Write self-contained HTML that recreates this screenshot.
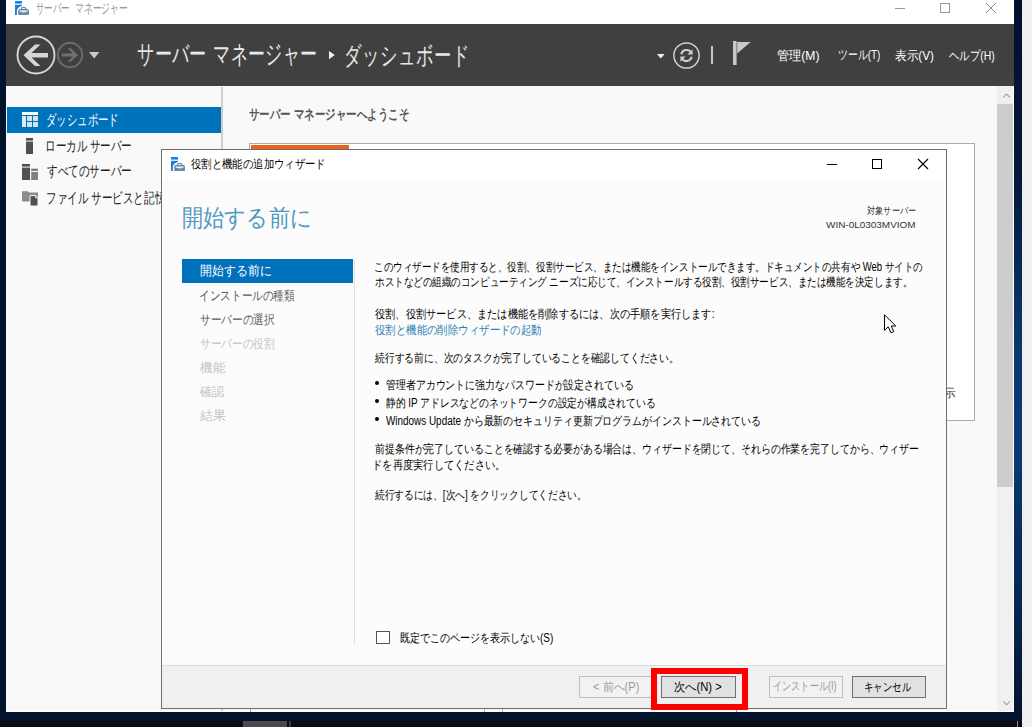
<!DOCTYPE html>
<html lang="ja">
<head>
<meta charset="utf-8">
<title>サーバー マネージャー</title>
<style>
html,body{margin:0;padding:0}
body{width:1032px;height:727px;position:relative;overflow:hidden;background:#01142c;font-family:"Liberation Sans",sans-serif;font-size:12px;color:#000}
.a{position:absolute;box-sizing:border-box}
.t{position:absolute;white-space:nowrap;transform-origin:0 50%;display:block}
svg{position:absolute;overflow:visible}
</style>
</head>
<body>
<!-- desktop strips -->
<div class="a" style="left:1014px;top:0;width:8px;height:721px;background:linear-gradient(180deg,#03102a 0%,#04183a 25%,#0a3568 45%,#0b3a72 60%,#072a58 80%,#03132e 100%)"></div>
<div class="a" style="left:1022px;top:0;width:10px;height:727px;background:#f0f0f0"></div>
<!-- taskbar -->
<div class="a" style="left:0;top:721px;width:1022px;height:6px;background:#0b0d11"></div>
<div class="a" style="left:243px;top:721px;width:44px;height:6px;background:#4b4b4b"></div>
<div class="a" style="left:289px;top:721px;width:2px;height:6px;background:#3c3c3c"></div>
<div class="a" style="left:1017px;top:721px;width:1px;height:6px;background:#8c8c8c"></div>

<!-- main window -->
<div class="a" id="win" style="left:6px;top:0;width:1008px;height:712px;background:#f9f9f9;overflow:hidden">
  <!-- title bar -->
  <div class="a" style="left:0;top:0;width:1008px;height:24px;background:#ffffff"></div>
  <!-- header -->
  <div class="a" style="left:0;top:24px;width:1008px;height:62px;background:#404040"></div>
  <!-- sidebar -->
  <div class="a" style="left:0;top:107px;width:215px;height:26px;background:#0072bc"></div>
  <div class="a" style="left:215px;top:87px;width:2px;height:625px;background:#cdcdcd"></div>
  <!-- welcome tile -->
  <div class="a" style="left:243px;top:143px;width:726px;height:278px;background:#ffffff;border:1px solid #ababab"></div>
  <div class="a" style="left:245px;top:145px;width:98px;height:6px;background:#e8641b"></div>
  <!-- scrollbar -->
  <div class="a" style="left:991px;top:86px;width:17px;height:626px;background:#f0f0f0"></div>
  <div class="a" style="left:991px;top:104px;width:17px;height:383px;background:#cdcdcd"></div>
  <!-- window frame -->
  <div class="a" style="left:0;top:86px;width:1px;height:626px;background:#ffffff"></div>
  <div class="a" style="left:1007px;top:86px;width:1px;height:626px;background:#ffffff"></div>
  <div class="a" style="left:0;top:711px;width:1008px;height:1px;background:#ffffff"></div>
  <!-- little lines under dialog -->
  <div class="a" style="left:244px;top:700px;width:1px;height:12px;background:#9a9a9a"></div>
  <div class="a" style="left:478px;top:700px;width:1px;height:12px;background:#b5b5b5"></div>
  <div class="a" style="left:496px;top:700px;width:1px;height:12px;background:#b5b5b5"></div>
  <div class="a" style="left:730px;top:700px;width:1px;height:12px;background:#9a9a9a"></div>
</div>
<span class="t" id="zs4" style="left:46.12px;top:185.50px;font-size:15px;line-height:23px;height:23px;color:#222222;transform:scaleX(0.7017)">ファイル サービスと記</span>
<span class="t" id="zs5" style="left:155.00px;top:185.50px;font-size:15px;line-height:23px;height:23px;color:#222222;transform:scaleX(0.8667)">憶</span>
<span class="t" id="zsh" style="left:944.45px;top:383.50px;font-size:12px;line-height:19px;height:19px;color:#333333;transform:scaleX(0.9680)">示</span>


<!-- dialog -->
<div class="a" id="dlg" style="left:161px;top:149px;width:786px;height:560px;background:#fcfcfc;border:1px solid #6e6e6e;overflow:hidden">
  <div class="a" style="left:0;top:0;width:784px;height:29px;background:#ffffff"></div>
  <!-- nav selected -->
  <div class="a" style="left:20px;top:109px;width:171px;height:24px;background:#0072bc"></div>
  <!-- nav separator -->
  <div class="a" style="left:192px;top:109px;width:1px;height:386px;background:#e0e0e0"></div>
  <!-- footer -->
  <div class="a" style="left:0;top:515px;width:784px;height:43px;background:#f0f0f0;border-top:1px solid #dcdcdc"></div>
  <!-- checkbox -->
  <div class="a" style="left:214px;top:481px;width:14px;height:13px;background:#ffffff;border:1px solid #555555"></div>
  <!-- buttons -->
  <div class="a" style="left:417px;top:526px;width:75px;height:22px;background:#f2f2f2;border:1px solid #bfbfbf"></div>
  <div class="a" style="left:499px;top:526px;width:75px;height:22px;background:#e1e1e1;border:1px solid #6f6f6f"></div>
  <div class="a" style="left:607px;top:526px;width:74px;height:22px;background:#f2f2f2;border:1px solid #bfbfbf"></div>
  <div class="a" style="left:690px;top:526px;width:74px;height:22px;background:#e1e1e1;border:1px solid #6f6f6f"></div>
  <!-- bullets -->
  <div class="a" style="left:213.2px;top:231.3px;width:4.2px;height:4.2px;border-radius:2.1px;background:#000"></div>
  <div class="a" style="left:213.2px;top:249.3px;width:4.2px;height:4.2px;border-radius:2.1px;background:#000"></div>
  <div class="a" style="left:213.2px;top:267.3px;width:4.2px;height:4.2px;border-radius:2.1px;background:#000"></div>
</div>
<!-- red highlight -->
<div class="a" style="left:651px;top:668px;width:97px;height:42px;border:6px solid #ff0000"></div>
<!-- app icon (title bar) -->
<svg style="left:15px;top:1px" width="14" height="14" viewBox="0 0 14 14"><rect x="0" y="0" width="7" height="2.6" fill="#1a80d9"/><rect x="0" y="3.8" width="7" height="10.2" fill="#1a80d9"/><path d="M1.9 14V9L3.6 6.4 7 4.7H14V14Z" fill="#fff"/><path d="M4.3 8.1H12.9L14 9.4V14H3.2V9.4Z" fill="#6d8aa6"/><path d="M6.3 8.3Q6.3 6.3 8.6 6.3 10.9 6.3 10.9 8.3" stroke="#6d8aa6" stroke-width="1.2" fill="none"/><path d="M4.4 9.6H12.8L12.2 10.7H9.6V11.5H7.6V10.7H5Z" fill="#ffffff"/></svg>
<!-- main window controls -->
<div class="a" style="left:895px;top:8px;width:10px;height:1px;background:#9a9a9a"></div>
<div class="a" style="left:940px;top:3px;width:10px;height:10px;border:1px solid #9a9a9a"></div>
<svg style="left:986px;top:3px" width="10" height="10" viewBox="0 0 10 10"><path d="M0 0L10 10M10 0L0 10" stroke="#8a8a8a" stroke-width="1"/></svg>
<!-- back / forward -->
<svg style="left:16px;top:35px" width="40" height="40" viewBox="0 0 40 40"><circle cx="20" cy="20" r="18.5" fill="none" stroke="#d6d6d6" stroke-width="1.9"/><path d="M7.5 20.2L19 9.5H24.5L15.5 18H32V22.5H15.5L24.5 31H19Z" fill="#d6d6d6"/></svg>
<svg style="left:57px;top:42px" width="26" height="26" viewBox="0 0 26 26"><circle cx="13" cy="13" r="12.2" fill="none" stroke="#6c6c6c" stroke-width="1.9"/><path d="M21 13L13.8 6.2H10.4L16 11.6H4.8V14.4H16L10.4 19.8H13.8Z" fill="#6f6f6f"/></svg>
<svg style="left:88.8px;top:52px" width="10.4" height="6.4" viewBox="0 0 10.4 6.4"><path d="M0 0H10.4L5.2 6.4Z" fill="#c9c9c9"/></svg>
<!-- breadcrumb arrow -->
<svg style="left:328.6px;top:51px" width="5.8" height="8.2" viewBox="0 0 5.8 8.2"><path d="M0 0L5.8 4.1L0 8.2Z" fill="#f0f0f0"/></svg>
<!-- header right icons -->
<svg style="left:656.7px;top:53.7px" width="7.6" height="4.6" viewBox="0 0 7.6 4.6"><path d="M0 0H7.6L3.8 4.6Z" fill="#f0f0f0"/></svg>
<svg style="left:673px;top:41.5px" width="27" height="27" viewBox="0 0 27 27"><circle cx="13.5" cy="13.5" r="12.6" fill="none" stroke="#d0d0d0" stroke-width="1.5"/><path d="M8.3 12.2A5.4 5.4 0 0 1 18.2 10.6" fill="none" stroke="#d0d0d0" stroke-width="2"/><path d="M19.6 7.2V12.4H14.4Z" fill="#d0d0d0"/><path d="M18.7 14.8A5.4 5.4 0 0 1 8.8 16.4" fill="none" stroke="#d0d0d0" stroke-width="2"/><path d="M7.4 19.8V14.6H12.6Z" fill="#d0d0d0"/></svg>
<div class="a" style="left:711px;top:46px;width:2px;height:18px;background:#c8c8c8"></div>
<svg style="left:733px;top:41px" width="18" height="24" viewBox="0 0 18 24"><rect x="0" y="0" width="3.6" height="24" fill="#c8c8c8"/><path d="M4.2 1H17.6L4.2 12.6Z" fill="#c8c8c8"/></svg>
<!-- sidebar icons -->
<svg style="left:22px;top:112px" width="16" height="15" viewBox="0 0 16 15"><rect x="0" y="0" width="16" height="3" fill="#ffffff"/><rect x="0" y="4" width="4" height="11" fill="#dceaf5"/><rect x="5" y="4" width="5" height="5" fill="#d3e5f3"/><rect x="11" y="4" width="5" height="5" fill="#d3e5f3"/><rect x="5" y="10" width="5" height="5" fill="#d3e5f3"/><rect x="11" y="10" width="5" height="5" fill="#d3e5f3"/></svg>
<svg style="left:26px;top:138px" width="7" height="16" viewBox="0 0 7 16"><rect x="0" y="0" width="7" height="2.6" fill="#505050"/><rect x="0" y="3.6" width="7" height="12.4" fill="#505050"/></svg>
<svg style="left:22px;top:164px" width="16" height="16" viewBox="0 0 16 16"><rect x="0" y="0" width="8" height="2.6" fill="#505050"/><rect x="0" y="3.6" width="8" height="12.4" fill="#505050"/><rect x="9.2" y="4.6" width="6.8" height="2.4" fill="#808080"/><rect x="9.2" y="8" width="6.8" height="8" fill="#808080"/></svg>
<svg style="left:22px;top:190px" width="16" height="16" viewBox="0 0 16 16"><path d="M0 1.2H6L7.2 2.6H16V11.4H0Z" fill="#8c8c8c"/><path d="M8 5.6H14L16 7.6V16H8Z" fill="#505050" stroke="#f9f9f9" stroke-width="1"/><path d="M13.6 5.8V8H15.8" fill="none" stroke="#f9f9f9" stroke-width=".8"/></svg>
<!-- scrollbar arrows -->
<svg style="left:1002.6px;top:93px" width="7.2" height="4.8" viewBox="0 0 9 6"><path d="M.5 5.5L4.5 1.2L8.5 5.5" fill="none" stroke="#9a9a9a" stroke-width="1.3"/></svg>
<svg style="left:1002.8px;top:701.2px" width="7.2" height="4.8" viewBox="0 0 9 6"><path d="M.5 .5L4.5 4.8L8.5 .5" fill="none" stroke="#9a9a9a" stroke-width="1.3"/></svg>
<!-- dialog title icon -->
<svg style="left:171px;top:157px" width="14" height="14" viewBox="0 0 14 14"><rect x="0" y="0" width="7" height="2.6" fill="#1a80d9"/><rect x="0" y="3.8" width="7" height="10.2" fill="#1a80d9"/><path d="M1.9 14V9L3.6 6.4 7 4.7H14V14Z" fill="#fff"/><path d="M4.3 8.1H12.9L14 9.4V14H3.2V9.4Z" fill="#6d8aa6"/><path d="M6.3 8.3Q6.3 6.3 8.6 6.3 10.9 6.3 10.9 8.3" stroke="#6d8aa6" stroke-width="1.2" fill="none"/><path d="M4.4 9.6H12.8L12.2 10.7H9.6V11.5H7.6V10.7H5Z" fill="#ffffff"/></svg>
<!-- dialog controls -->
<div class="a" style="left:827px;top:164px;width:10px;height:1px;background:#000"></div>
<div class="a" style="left:872px;top:159px;width:10px;height:10px;border:1px solid #000"></div>
<svg style="left:918px;top:159px" width="10" height="10" viewBox="0 0 10 10"><path d="M0 0L10 10M10 0L0 10" stroke="#000" stroke-width="1.1"/></svg>
<!-- mouse cursor -->
<svg style="left:884px;top:314px" width="13" height="20" viewBox="0 0 13 20"><path d="M.5 .8V16.3L4.3 12.8 7 18.8 9.7 17.6 7.3 12H11.8Z" fill="#ffffff" stroke="#000000" stroke-width="1" stroke-linejoin="miter"/></svg>

<span class="t" id="tb" style="left:35.61px;top:-3.50px;font-size:14px;line-height:22px;height:22px;color:#999999;transform:scaleX(0.6052)">サーバー</span>
<span class="t" id="tb2" style="left:74.83px;top:-3.50px;font-size:14px;line-height:22px;height:22px;color:#999999;transform:scaleX(0.6305)">マネージャー</span>
<span class="t" id="h1" style="left:137.16px;top:34.50px;font-size:26px;line-height:38px;height:38px;color:#e8e8e8;transform:scaleX(0.6558)">サーバー</span>
<span class="t" id="h1b" style="left:212.78px;top:34.50px;font-size:26px;line-height:38px;height:38px;color:#e8e8e8;transform:scaleX(0.6516)">マネージャー</span>
<span class="t" id="h2" style="left:344.21px;top:36.50px;font-size:25px;line-height:37px;height:37px;color:#e8e8e8;transform:scaleX(0.6938)">ダッシュボード</span>
<span class="t" id="m1" style="left:777.42px;top:45.50px;font-size:13px;line-height:20px;height:20px;color:#ffffff;transform:scaleX(0.9333)">管理(M)</span>
<span class="t" id="m2" style="left:838.05px;top:44.50px;font-size:13px;line-height:20px;height:20px;color:#ffffff;transform:scaleX(0.7628)">ツール(T)</span>
<span class="t" id="m3" style="left:895.00px;top:45.50px;font-size:13px;line-height:20px;height:20px;color:#ffffff;transform:scaleX(0.8944)">表示(V)</span>
<span class="t" id="m4" style="left:948.50px;top:45.50px;font-size:13px;line-height:20px;height:20px;color:#ffffff;transform:scaleX(0.8000)">ヘルプ(H)</span>
<span class="t" id="s1" style="left:46.13px;top:107.50px;font-size:15px;line-height:23px;height:23px;color:#ffffff;transform:scaleX(0.6928)">ダッシュボード</span>
<span class="t" id="s2" style="left:45.25px;top:133.50px;font-size:15px;line-height:23px;height:23px;color:#222222;transform:scaleX(0.7000)">ローカル サーバー</span>
<span class="t" id="s3" style="left:47.00px;top:158.50px;font-size:15px;line-height:23px;height:23px;color:#222222;transform:scaleX(0.7074)">すべてのサーバー</span>
<span class="t" id="wl" style="left:248.54px;top:103.50px;font-size:13.5px;line-height:21px;height:21px;color:#555555;font-weight:bold;transform:scaleX(0.7486)">サーバー マネージャーへようこそ</span>
<span class="t" id="dt" style="left:191.00px;top:155.00px;font-size:12px;line-height:19px;height:19px;color:#000000;transform:scaleX(0.8645)">役割と機能の追加ウィザード</span>
<span class="t" id="dh" style="left:181.90px;top:200.00px;font-size:24px;line-height:36px;height:36px;color:#4f99c0;transform:scaleX(0.8835)">開始する前に</span>
<span class="t" id="ts1" style="left:867.00px;top:202.50px;font-size:9.5px;line-height:15px;height:15px;color:#333333;transform:scaleX(0.8167)">対象サーバー</span>
<span class="t" id="ts2" style="left:826.35px;top:217.00px;font-size:9.5px;line-height:15px;height:15px;color:#333333;transform:scaleX(1.0471)">WIN-0L0303MVIOM</span>
<span class="t" id="n1" style="left:200.43px;top:261.00px;font-size:13px;line-height:20px;height:20px;color:#ffffff;transform:scaleX(0.9162)">開始する前に</span>
<span class="t" id="n2" style="left:199.46px;top:285.50px;font-size:13px;line-height:20px;height:20px;color:#5a5a5a;transform:scaleX(0.8175)">インストールの種類</span>
<span class="t" id="n3" style="left:200.49px;top:309.50px;font-size:13px;line-height:20px;height:20px;color:#5a5a5a;transform:scaleX(0.8225)">サーバーの選択</span>
<span class="t" id="n4" style="left:200.48px;top:333.50px;font-size:13px;line-height:20px;height:20px;color:#c4c4c4;transform:scaleX(0.8224)">サーバーの役割</span>
<span class="t" id="n5" style="left:200.36px;top:357.50px;font-size:13px;line-height:20px;height:20px;color:#c4c4c4;transform:scaleX(0.9623)">機能</span>
<span class="t" id="n6" style="left:200.40px;top:381.50px;font-size:13px;line-height:20px;height:20px;color:#c4c4c4;transform:scaleX(0.9531)">確認</span>
<span class="t" id="n7" style="left:200.36px;top:405.50px;font-size:13px;line-height:20px;height:20px;color:#c4c4c4;transform:scaleX(1.0008)">結果</span>
<span class="t" id="b1" style="left:374.01px;top:257.50px;font-size:12px;line-height:19px;height:19px;color:#000000;transform:scaleX(0.7942)">このウィザードを使用すると、役割、役割サービス、または機能をインストールできます。ドキュメントの共有や Web サイトの</span>
<span class="t" id="b2" style="left:375.00px;top:273.00px;font-size:12px;line-height:19px;height:19px;color:#000000;transform:scaleX(0.7955)">ホストなどの組織のコンピューティング ニーズに応じて、インストールする役割、役割サービス、または機能を決定します。</span>
<span class="t" id="b3" style="left:375.00px;top:305.00px;font-size:12px;line-height:19px;height:19px;color:#000000;transform:scaleX(0.8502)">役割、役割サービス、または機能を削除するには、次の手順を実行します:</span>
<span class="t" id="b4" style="left:375.00px;top:321.00px;font-size:12px;line-height:19px;height:19px;color:#2b7fb0;transform:scaleX(0.8680)">役割と機能の削除ウィザードの起動</span>
<span class="t" id="b5" style="left:375.00px;top:349.00px;font-size:12px;line-height:19px;height:19px;color:#000000;transform:scaleX(0.8165)">続行する前に、次のタスクが完了していることを確認してください。</span>
<span class="t" id="b6" style="left:385.51px;top:376.00px;font-size:12px;line-height:19px;height:19px;color:#000000;transform:scaleX(0.8261)">管理者アカウントに強力なパスワードが設定されている</span>
<span class="t" id="b7" style="left:385.51px;top:394.00px;font-size:12px;line-height:19px;height:19px;color:#000000;transform:scaleX(0.8176)">静的 IP アドレスなどのネットワークの設定が構成されている</span>
<span class="t" id="b8" style="left:385.51px;top:412.00px;font-size:12px;line-height:19px;height:19px;color:#000000;transform:scaleX(0.8260)">Windows Update から最新のセキュリティ更新プログラムがインストールされている</span>
<span class="t" id="b9" style="left:375.00px;top:439.50px;font-size:12px;line-height:19px;height:19px;color:#000000;transform:scaleX(0.8243)">前提条件が完了していることを確認する必要がある場合は、ウィザードを閉じて、それらの作業を完了してから、ウィザー</span>
<span class="t" id="b10" style="left:371.79px;top:456.00px;font-size:12px;line-height:19px;height:19px;color:#000000;transform:scaleX(0.8558)">ドを再度実行してください。</span>
<span class="t" id="b11" style="left:375.00px;top:486.00px;font-size:12px;line-height:19px;height:19px;color:#000000;transform:scaleX(0.8079)">続行するには、[次へ] をクリックしてください。</span>
<span class="t" id="ck" style="left:400.48px;top:628.50px;font-size:12px;line-height:19px;height:19px;color:#000000;transform:scaleX(0.8327)">既定でこのページを表示しない(S)</span>
<span class="t" id="bt1" style="left:593.00px;top:678.00px;font-size:12px;line-height:19px;height:19px;color:#9a9a9a;transform:scaleX(0.9200)">&lt; 前へ(P)</span>
<span class="t" id="bt2" style="left:674.41px;top:678.00px;font-size:12px;line-height:19px;height:19px;color:#000000;transform:scaleX(0.9368)">次へ(N) &gt;</span>
<span class="t" id="bt3" style="left:773.05px;top:677.00px;font-size:12px;line-height:19px;height:19px;color:#9a9a9a;transform:scaleX(0.7637)">インストール(I)</span>
<span class="t" id="bt4" style="left:864.02px;top:678.00px;font-size:12px;line-height:19px;height:19px;color:#000000;transform:scaleX(0.7832)">キャンセル</span>
</body>
</html>
